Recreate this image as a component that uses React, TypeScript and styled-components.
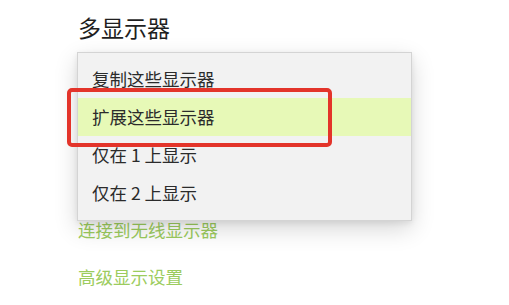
import React from 'react';
import styled, { createGlobalStyle } from 'styled-components';

const GlobalStyle = createGlobalStyle`
    html, body {
        margin: 0;
        padding: 0;
        background: #fff;
    }
    body {
        font-family: "Noto Sans CJK SC", "Noto Sans", sans-serif;
        overflow: hidden;
    }
`;

const options = ['复制这些显示器', '扩展这些显示器', '仅在 1 上显示', '仅在 2 上显示'];
const selected = 1;

const App: React.FC = () => {
    return (
        <>
            <GlobalStyle />
            <Page>
                <Title>多显示器</Title>
                <DropdownAnchor>
                    <Menu>
                        {options.map((o, i) => (
                            <MenuItem key={o} active={i === selected}>{o}</MenuItem>
                        ))}
                        <Annotation />
                    </Menu>
                </DropdownAnchor>
                <Links>
                    <LinkText>连接到无线显示器</LinkText>
                    <LinkText>高级显示设置</LinkText>
                </Links>
            </Page>
        </>
    );
};

export default App;

const Page = styled.div`
    display: flex;
    flex-direction: column;
    width: 509px;
    height: 305px;
    box-sizing: border-box;
    padding: 11px 0 0 78px;
    overflow: hidden;
`;

const Title = styled.div`
    font-size: 23px;
    line-height: 32px;
    color: #1f1f1f;
`;

// the closed combo box sits under the open list
const DropdownAnchor = styled.div`
    position: relative;
    height: 173px;
`;

const Menu = styled.div`
    position: absolute;
    left: -1px;
    top: 9px;
    width: 335px;
    display: flex;
    flex-direction: column;
    box-sizing: border-box;
    padding: 7px 0 8px;
    background: #f2f2f2;
    border: 1px solid #d4d4d4;
    box-shadow: 0 8px 22px rgba(0, 0, 0, 0.16), 0 2px 6px rgba(0, 0, 0, 0.08);
    z-index: 2;
`;

const MenuItem = styled.div<{ active?: boolean }>`
    height: 38px;
    line-height: 38px;
    padding-left: 14px;
    font-size: 17.5px;
    color: #2b2b2b;
    background: ${p => p.active ? '#e7f9b7' : 'transparent'};
`;

const Annotation = styled.div`
    position: absolute;
    left: -11px;
    top: 35px;
    width: 265px;
    height: 59px;
    box-sizing: border-box;
    border: 4px solid #e3342a;
    border-radius: 5px;
`;

const Links = styled.div`
    display: flex;
    flex-direction: column;
    gap: 19px;
`;

const LinkText = styled.div`
    font-size: 17.5px;
    line-height: 28px;
    color: #9ccc5e;
`;
